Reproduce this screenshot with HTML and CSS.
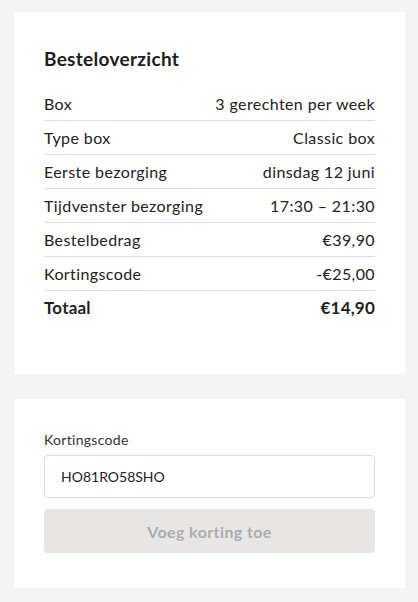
FILE: index.html
```html
<!DOCTYPE html>
<html lang="nl">
<head>
<meta charset="utf-8">
<link rel="stylesheet" href="styles.css">
</head>
<body>
<div class="page">
  <section class="card summary">
    <h2 class="title">Besteloverzicht</h2>
    <div class="rows">
      <div class="row"><span>Box</span><span>3 gerechten per week</span></div>
      <div class="row"><span>Type box</span><span>Classic box</span></div>
      <div class="row"><span>Eerste bezorging</span><span>dinsdag 12 juni</span></div>
      <div class="row"><span>Tijdvenster bezorging</span><span>17:30 – 21:30</span></div>
      <div class="row"><span>Bestelbedrag</span><span>€39,90</span></div>
      <div class="row"><span>Kortingscode</span><span>-€25,00</span></div>
      <div class="row total"><span>Totaal</span><span>€14,90</span></div>
    </div>
  </section>
  <section class="card coupon">
    <label class="label" for="code">Kortingscode</label>
    <input class="input" id="code" type="text" value="HO81RO58SHO">
    <button class="btn" type="button" disabled>Voeg korting toe</button>
  </section>
</div>
</body>
</html>
```
FILE: styles.css
```css
html, body {
  margin: 0;
  padding: 0;
  background: #f4f4f4;
}
body {
  font-family: Lato, "Noto Sans", sans-serif;
  color: #222;
}
.page {
  padding: 12px 13px 0 14px;
  display: flex;
  flex-direction: column;
  gap: 25px;
}
.card {
  background: #fff;
  padding: 0 30px;
}
.summary {
  padding-top: 35px;
  padding-bottom: 50px;
}
.title {
  margin: 0 0 16px;
  font-size: 19px;
  line-height: 24px;
  letter-spacing: 0.3px;
  font-weight: 700;
  color: #1d1d1d;
}
.rows {
  display: flex;
  flex-direction: column;
}
.row {
  display: flex;
  justify-content: space-between;
  align-items: center;
  height: 33px;
  border-bottom: 1px solid #dedede;
  font-size: 16px;
  letter-spacing: 0.4px;
}
.row.total {
  border-bottom: none;
  font-weight: 700;
  font-size: 17px;
  letter-spacing: 0.2px;
}
.coupon {
  padding-top: 32px;
  padding-bottom: 35px;
  display: flex;
  flex-direction: column;
}
.label {
  font-size: 14px;
  line-height: 18px;
  letter-spacing: 0.3px;
  color: #333;
  margin-bottom: 6px;
}
.input {
  box-sizing: border-box;
  height: 43px;
  border: 1px solid #dcdcdc;
  border-radius: 4px;
  padding: 0 16px;
  font-family: inherit;
  font-size: 14px;
  color: #222;
  outline: none;
  margin: 0 0 11px;
}
.btn {
  height: 44px;
  border: none;
  border-radius: 4px;
  background: #e7e6e5;
  color: #adadad;
  font-family: inherit;
  font-size: 16px;
  letter-spacing: 0.4px;
  font-weight: 700;
}
```
